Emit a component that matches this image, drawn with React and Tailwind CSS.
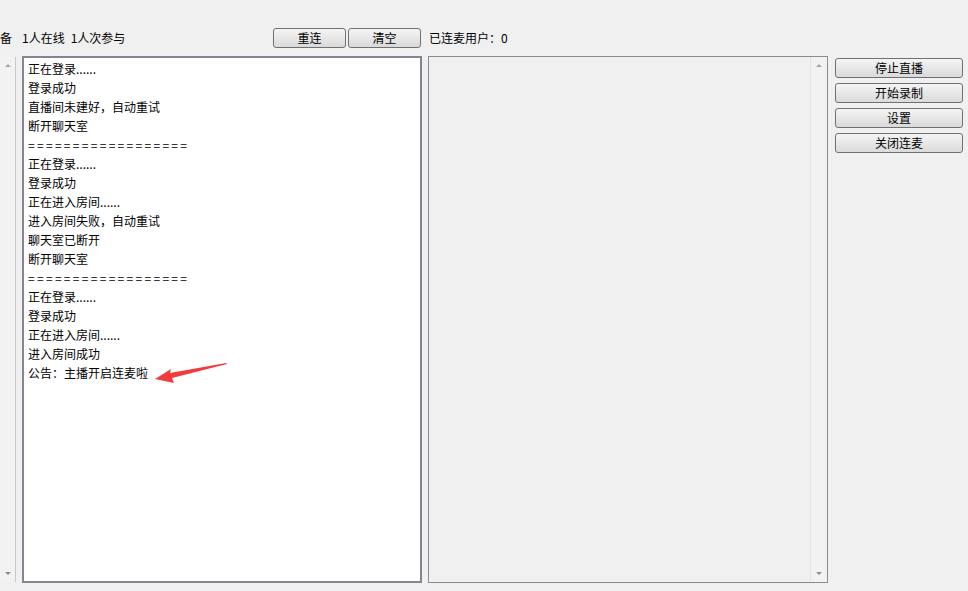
const logLines = [
  "正在登录......",
  "登录成功",
  "直播间未建好，自动重试",
  "断开聊天室",
  "==================",
  "正在登录......",
  "登录成功",
  "正在进入房间......",
  "进入房间失败，自动重试",
  "聊天室已断开",
  "断开聊天室",
  "==================",
  "正在登录......",
  "登录成功",
  "正在进入房间......",
  "进入房间成功",
  "公告：主播开启连麦啦",
];

const WinButton = ({ children, className = "" }) => (
  <button
    className={`h-[20px] border border-[#707070] rounded-[3px] bg-gradient-to-b from-[#f5f5f5] to-[#dadada] text-[12px] leading-none text-black ${className}`}
  >
    {children}
  </button>
);

const ScrollBar = ({ className = "" }) => (
  <div className={`flex flex-col justify-between bg-[#f2f2f2] ${className}`}>
    <div className="h-[17px] flex items-center justify-center">
      <div className="w-0 h-0 border-l-[3px] border-r-[3px] border-b-[3px] border-l-transparent border-r-transparent border-b-[#a6a6a6]" />
    </div>
    <div className="h-[17px] flex items-center justify-center">
      <div className="w-0 h-0 border-l-[3px] border-r-[3px] border-t-[3px] border-l-transparent border-r-transparent border-t-[#8c8c8c]" />
    </div>
  </div>
);

export default function App() {
  return (
    <div
      className="w-[968px] h-[591px] bg-[#f0f0f0] overflow-hidden text-[12px] text-black"
      style={{ fontFamily: '"Noto Sans CJK SC", "Liberation Sans", sans-serif' }}
    >
      {/* top bar */}
      <div className="flex items-center pt-[27px] h-[48px]">
        <div className="w-[273px] flex items-center">
          <span>备</span>
          <span className="ml-[10px]">1人在线</span>
          <span className="ml-[6px]">1人次参与</span>
        </div>
        <WinButton className="w-[73px]">重连</WinButton>
        <WinButton className="w-[73px] ml-[2px]">清空</WinButton>
        <span className="ml-[8px]">已连麦用户：0</span>
      </div>

      {/* main */}
      <div className="flex mt-[8px] h-[527px]">
        <ScrollBar className="w-[16px] mt-[1px] mb-[1px] border-r border-[#c8c8c8]" />

        <div className="relative ml-[6px] w-[400px] border-2 border-[#858592] bg-white pl-[4px] pt-[1px]">
          {logLines.map((line, i) => (
            <div
              key={i}
              className={`h-[19px] leading-[19px] whitespace-nowrap ${line.startsWith("=") ? "tracking-[2.3px]" : ""}`}
            >
              {line}
            </div>
          ))}
          <svg
            className="absolute left-[130px] top-[302px]"
            width="76"
            height="24"
            viewBox="0 0 76 24"
          >
            <path d="M1 19 L17 9 L16 13 L72 3 L73 4 L18 18 L20 23 Z" fill="#f03c3c" />
          </svg>
        </div>

        <div className="ml-[6px] w-[400px] border border-[#8a8a99] bg-[#f0f0f0] flex justify-end">
          <ScrollBar className="w-[17px] border-l border-[#e4e4e4]" />
        </div>

        <div className="ml-[7px] mt-[2px] flex flex-col gap-[5px]">
          <WinButton className="w-[128px]">停止直播</WinButton>
          <WinButton className="w-[128px]">开始录制</WinButton>
          <WinButton className="w-[128px]">设置</WinButton>
          <WinButton className="w-[128px]">关闭连麦</WinButton>
        </div>
      </div>
    </div>
  );
}
